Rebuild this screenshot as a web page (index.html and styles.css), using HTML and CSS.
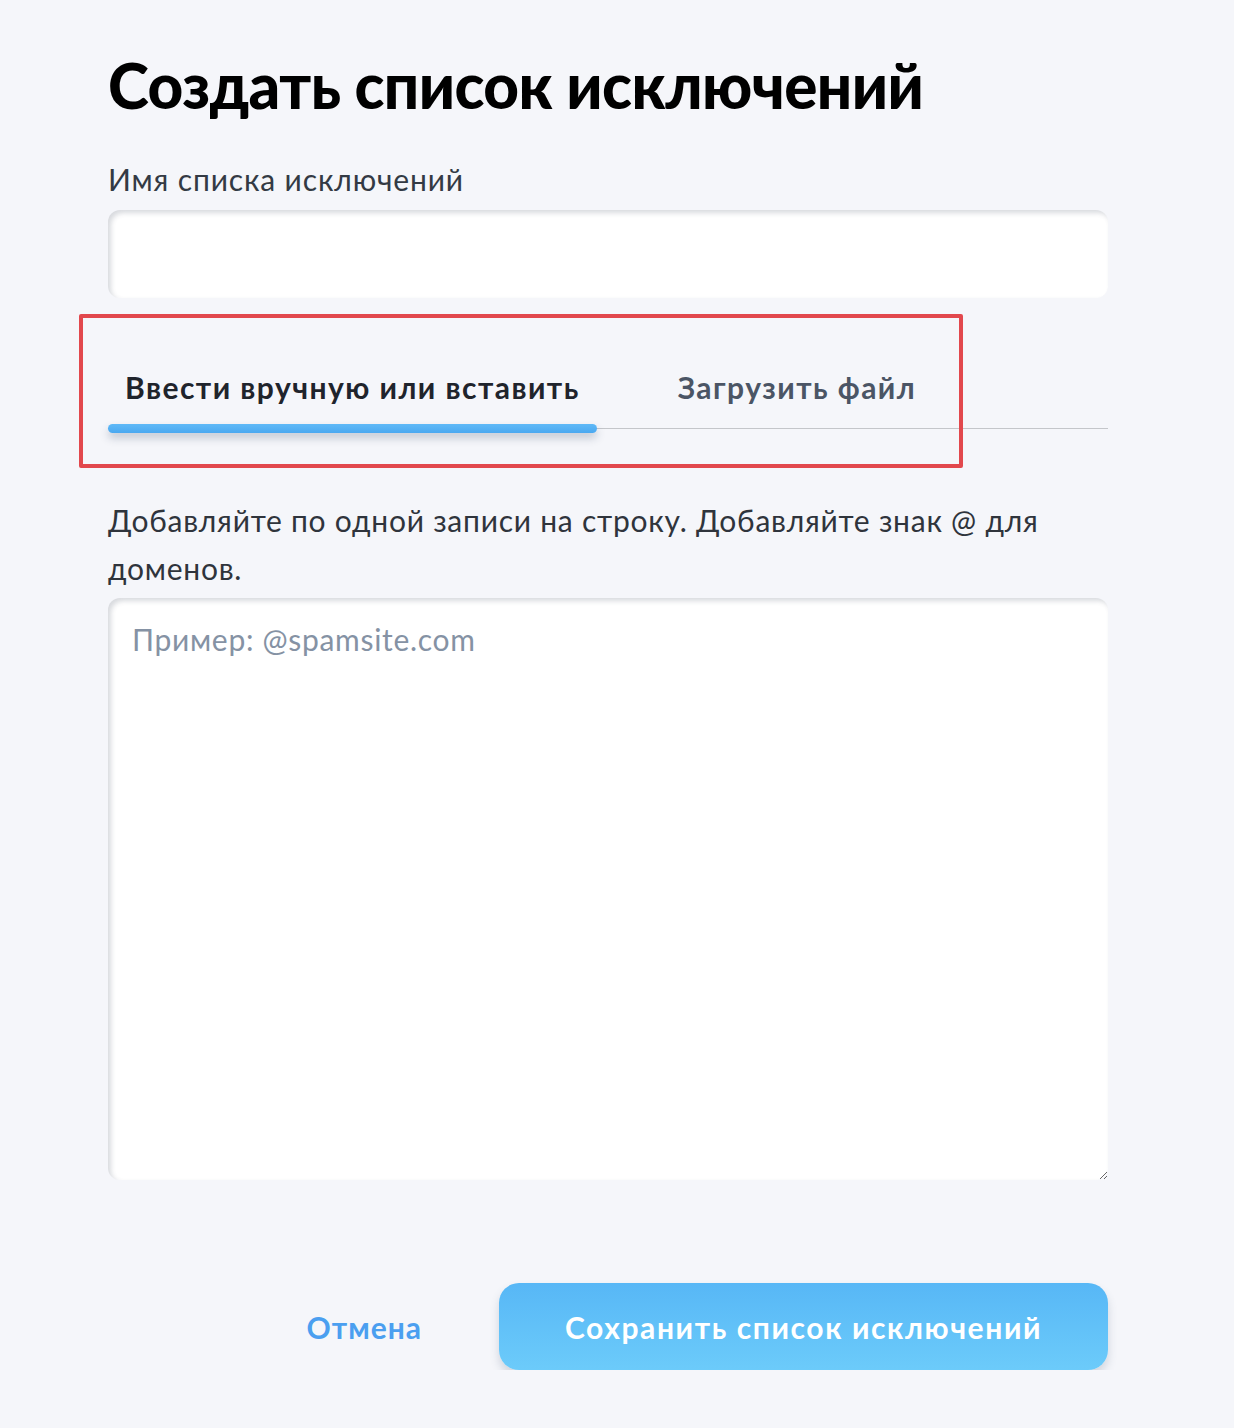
FILE: index.html
```html
<!DOCTYPE html>
<html lang="ru">
<head>
  <meta charset="UTF-8">
  <meta name="viewport" content="width=device-width, initial-scale=1.0">
  <title>Создать список исключений</title>
  <link rel="stylesheet" href="styles.css">
</head>
<body>
  <div class="page">
    <h1 class="title">Создать список исключений</h1>

    <label class="field-label" for="listName">Имя списка исключений</label>
    <input type="text" id="listName" class="text-input">

    <div class="tabs-wrap">
      <div class="tabs">
        <div class="tab active">Ввести вручную или вставить</div>
        <div class="tab">Загрузить файл</div>
      </div>
    </div>

    <p class="hint">Добавляйте по одной записи на строку. Добавляйте знак @ для доменов.</p>
    <textarea class="entries" placeholder="Пример: @spamsite.com"></textarea>

    <div class="actions">
      <button class="btn-cancel">Отмена</button>
      <button class="btn-save">Сохранить список исключений</button>
    </div>
  </div>
</body>
</html>
```

FILE: styles.css
```css
body {
  margin: 0;
  background: #f5f6fa;
  font-family: 'Lato', 'Open Sans', sans-serif;
  color: #2b2f36;
}

.page {
  width: 1000px;
  margin-left: 108px;
  padding-top: 48px;
}

.title {
  margin: 0;
  font-size: 62px;
  font-weight: 900;
  color: #000;
  letter-spacing: -0.6px;
  line-height: 74px;
}

.field-label {
  display: block;
  margin-top: 39px;
  font-size: 30px;
  letter-spacing: 0.85px;
  color: #333a44;
  line-height: 36px;
}

.text-input {
  display: block;
  width: 100%;
  height: 88px;
  margin-top: 13px;
  border: none;
  border-radius: 12px;
  background: #fff;
  box-sizing: border-box;
  box-shadow: inset 3px 3px 5px rgba(60, 70, 90, 0.2);
  outline: none;
}

.tabs-wrap {
  position: relative;
  padding-top: 71px;
}

/* annotation frame drawn over the tabs */
.tabs-wrap::after {
  content: "";
  position: absolute;
  left: -29px;
  top: 16px;
  width: 876px;
  height: 146px;
  border: 4px solid #e2484d;
  border-radius: 2px;
}

.tabs {
  display: flex;
  gap: 64px;
  border-bottom: 1px solid #c4c6ca;
}

.tab {
  position: relative;
  padding: 0 17px 23px;
  font-size: 30px;
  font-weight: 700;
  letter-spacing: 1.45px;
  color: #4b5565;
  line-height: 36px;
}

.tab.active {
  color: #1f242c;
}

.tab.active::after {
  content: "";
  position: absolute;
  left: 0;
  right: 0;
  bottom: -5px;
  height: 9px;
  border-radius: 5px;
  background: linear-gradient(#5fb9f7, #4aa8f0);
  box-shadow: 0 5px 8px rgba(40, 60, 90, 0.25);
}

.hint {
  margin: 67px 0 0;
  font-size: 30px;
  line-height: 48px;
  letter-spacing: 0.75px;
  color: #2f343c;
}

.entries {
  display: block;
  width: 100%;
  height: 582px;
  margin-top: 6px;
  padding: 23px 24px;
  border: none;
  border-radius: 12px;
  background: #fff;
  box-sizing: border-box;
  box-shadow: inset 3px 3px 5px rgba(60, 70, 90, 0.2);
  font-family: 'Lato', 'Open Sans', sans-serif;
  font-size: 30px;
  letter-spacing: 0.7px;
  outline: none;
}

.entries::placeholder {
  color: #8592a4;
}

.actions {
  display: flex;
  justify-content: flex-end;
  align-items: center;
  gap: 77px;
  margin-top: 103px;
}

.btn-cancel {
  border: none;
  background: none;
  padding: 0;
  font-family: 'Lato', 'Open Sans', sans-serif;
  font-size: 30px;
  font-weight: 700;
  letter-spacing: 1px;
  color: #4b9ff0;
  cursor: pointer;
}

.btn-save {
  width: 609px;
  height: 87px;
  border: none;
  border-radius: 20px;
  background: linear-gradient(#57b7f6, #6ccbfa);
  box-shadow: 0 6px 10px rgba(60, 80, 110, 0.2);
  font-family: 'Lato', 'Open Sans', sans-serif;
  font-size: 30px;
  font-weight: 700;
  letter-spacing: 1.6px;
  color: #fff;
  cursor: pointer;
}
```
